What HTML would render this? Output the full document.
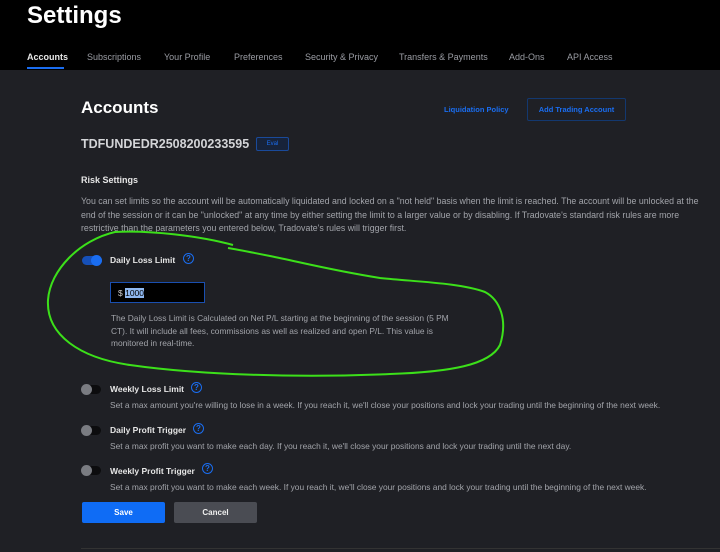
<!DOCTYPE html>
<html><head><style>
body{margin:0;width:720px;height:552px;overflow:hidden;background:#1f2025;font-family:"Liberation Sans",sans-serif;position:relative}
.hdr{position:absolute;left:0;top:0;width:720px;height:70px;background:#000}
.t{position:absolute;white-space:nowrap}
.nav{font-size:9px;color:#9a9ca3;top:52px}
.desc{font-size:8.4px;color:#a2a4aa;line-height:14.5px}
.lbl{font-size:8.5px;color:#e6e6e6;font-weight:bold}
.q{position:absolute;width:9px;height:9px;border:1.2px solid #1a6df0;border-radius:50%;color:#1a6df0;font-size:8px;line-height:9px;text-align:center;font-weight:bold}
.tg{position:absolute;width:20px;height:9px;border-radius:5px;background:#0c0c0e}
.tg i{position:absolute;left:0;top:-1px;width:11px;height:11px;border-radius:50%;background:#7a7c82}
</style></head><body>
<div class="hdr"></div>
<div class="t" style="left:27px;top:2px;font-size:24px;font-weight:bold;color:#fff">Settings</div>
<div class="t nav" style="left:27px;color:#e8e8e8;font-weight:bold">Accounts</div>
<div style="position:absolute;left:27px;top:67px;width:37px;height:2px;background:#1a6df0"></div>
<div class="t nav" style="left:87px">Subscriptions</div>
<div class="t nav" style="left:164px">Your Profile</div>
<div class="t nav" style="left:234px">Preferences</div>
<div class="t nav" style="left:305px">Security &amp; Privacy</div>
<div class="t nav" style="left:399px">Transfers &amp; Payments</div>
<div class="t nav" style="left:509px">Add-Ons</div>
<div class="t nav" style="left:567px">API Access</div>
<div class="t" style="left:81px;top:98px;font-size:17px;font-weight:bold;color:#fff">Accounts</div>
<div class="t" style="left:444px;top:105px;font-size:7.5px;font-weight:bold;color:#1a6df0">Liquidation Policy</div>
<div style="position:absolute;left:527px;top:98px;width:99px;height:23px;border:1px solid #13386f;border-radius:2px;box-sizing:border-box;color:#1a6df0;font-size:7.5px;font-weight:bold;text-align:center;line-height:21px">Add Trading Account</div>
<div class="t" style="left:81px;top:137px;font-size:12.5px;color:#d4d5d8;font-weight:bold">TDFUNDEDR2508200233595</div>
<div style="position:absolute;left:256px;top:137px;width:33px;height:14px;border:1px solid #1a4a9a;background:#17233a;border-radius:2px;box-sizing:border-box;color:#1a6df0;font-size:6px;text-align:center;line-height:12px">Eval</div>
<div class="t" style="left:81px;top:175px;font-size:9px;font-weight:bold;color:#e6e6e6">Risk Settings</div>
<div class="t desc" style="left:81px;top:195px;font-size:8.8px;line-height:13.5px">You can set limits so the account will be automatically liquidated and locked on a "not held" basis when the limit is reached. The account will be unlocked at the<br>end of the session or it can be "unlocked" at any time by either setting the limit to a larger value or by disabling. If Tradovate's standard risk rules are more<br>restrictive than the parameters you entered below, Tradovate's rules will trigger first.</div>
<div class="tg" style="left:82px;top:256px;background:#1650b8"><i style="left:9px;background:#1a6df0"></i></div>
<div class="t lbl" style="left:110px;top:255px">Daily Loss Limit</div>
<div class="q" style="left:183px;top:253px">?</div>
<div style="position:absolute;left:110px;top:282px;width:95px;height:21px;border:1.5px solid #1a4fb0;background:#000;box-sizing:border-box"></div>
<div class="t" style="left:118px;top:288px;font-size:8.5px;color:#ccc">$ <span style="background:#8fb8f0;color:#000">1000</span></div>
<div class="t desc" style="left:111px;top:312px;line-height:12.5px">The Daily Loss Limit is Calculated on Net P/L starting at the beginning of the session (5 PM<br>CT). It will include all fees, commissions as well as realized and open P/L. This value is<br>monitored in real-time.</div>
<div class="tg" style="left:81px;top:385px"><i></i></div>
<div class="t lbl" style="left:110px;top:384px">Weekly Loss Limit</div>
<div class="q" style="left:191px;top:382px">?</div>
<div class="t desc" style="left:110px;top:398px">Set a max amount you're willing to lose in a week. If you reach it, we'll close your positions and lock your trading until the beginning of the next week.</div>
<div class="tg" style="left:81px;top:426px"><i></i></div>
<div class="t lbl" style="left:110px;top:425px">Daily Profit Trigger</div>
<div class="q" style="left:193px;top:423px">?</div>
<div class="t desc" style="left:110px;top:439px">Set a max profit you want to make each day. If you reach it, we'll close your positions and lock your trading until the next day.</div>
<div class="tg" style="left:81px;top:466px"><i></i></div>
<div class="t lbl" style="left:110px;top:466px">Weekly Profit Trigger</div>
<div class="q" style="left:202px;top:463px">?</div>
<div class="t desc" style="left:110px;top:480px">Set a max profit you want to make each week. If you reach it, we'll close your positions and lock your trading until the beginning of the next week.</div>
<div style="position:absolute;left:82px;top:502px;width:83px;height:21px;background:#0f6cf5;border-radius:2px;color:#fff;font-size:8px;font-weight:bold;text-align:center;line-height:21px">Save</div>
<div style="position:absolute;left:174px;top:502px;width:83px;height:21px;background:#4a4c53;border-radius:2px;color:#eee;font-size:8px;font-weight:bold;text-align:center;line-height:21px">Cancel</div>
<div style="position:absolute;left:81px;top:548px;width:639px;height:1px;background:#333"></div>
<svg style="position:absolute;left:0;top:0" width="720" height="552"><path d="M233 245 C200 236 150 230 115 232 C80 240 50 270 48 300 C46 335 80 358 130 365 C200 375 300 378 390 374 C450 372 490 365 500 345 C508 320 500 300 485 292 C460 283 420 282 380 278 C330 270 300 262 270 256 C250 252 240 250 228 248" fill="none" stroke="#3ce01a" stroke-width="2"/></svg>
</body></html>
